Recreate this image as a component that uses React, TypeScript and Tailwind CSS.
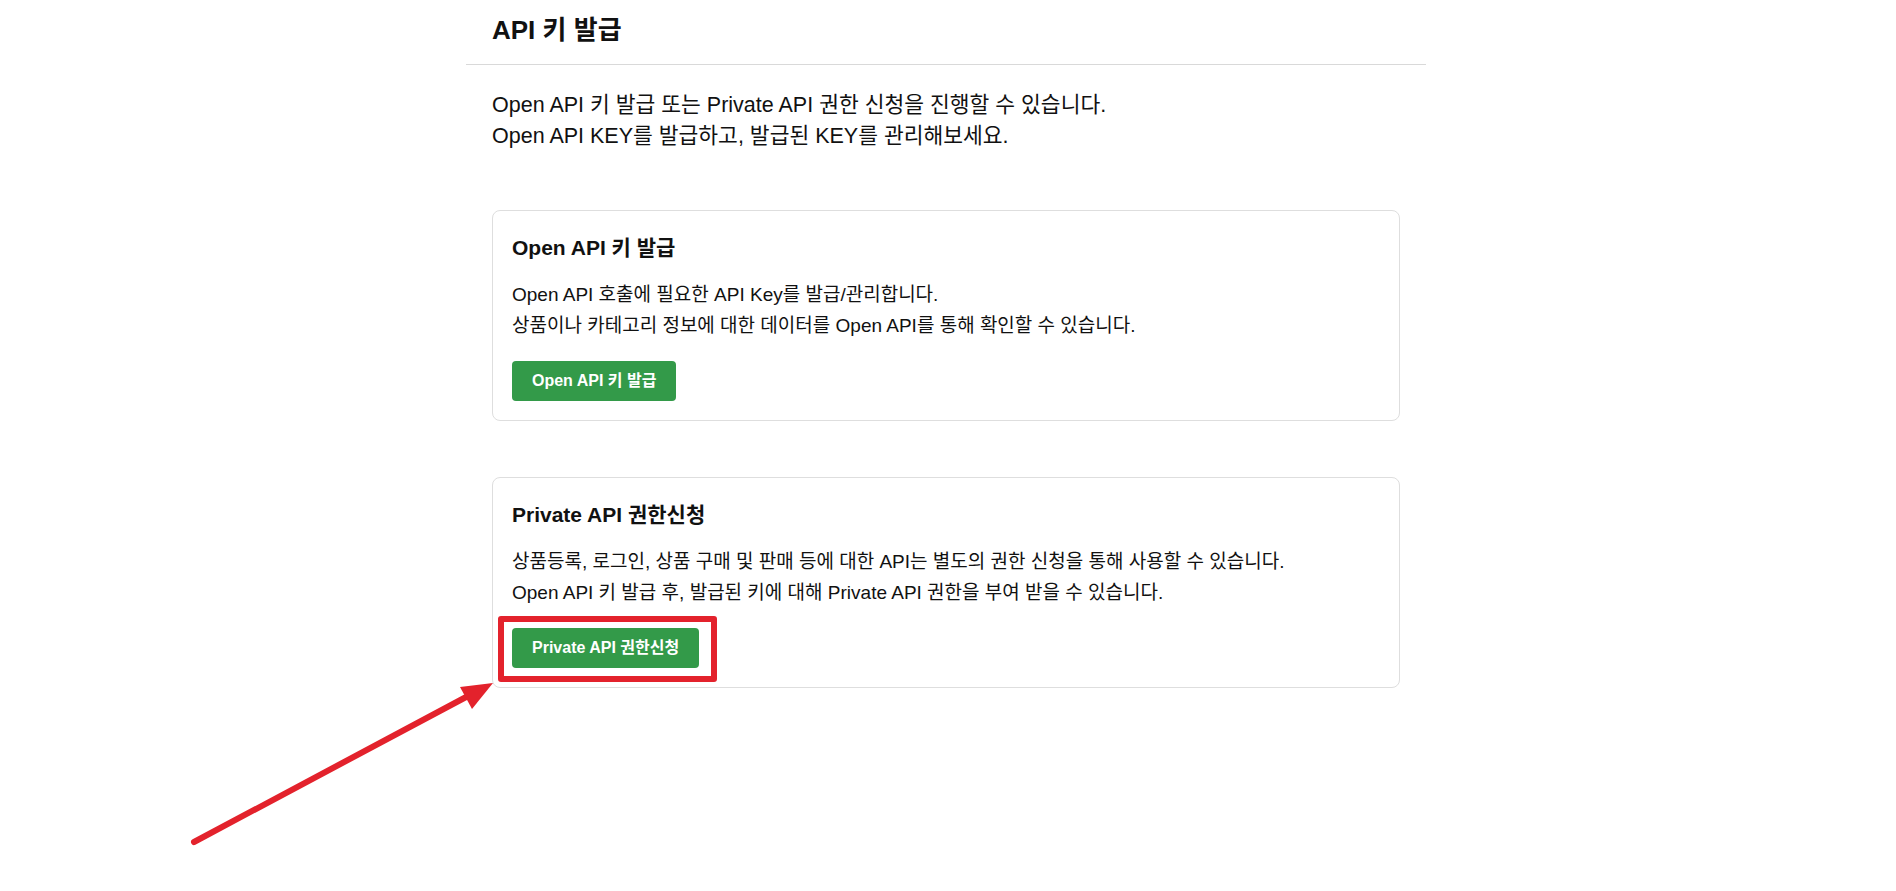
import React from "react";

const font = { fontFamily: '"Liberation Sans", "Noto Sans CJK KR", sans-serif' };

function Card({
  title,
  lines,
  button,
  highlight,
}: {
  title: string;
  lines: string[];
  button: string;
  highlight?: boolean;
}) {
  return (
    <div className="rounded-[8px] border border-[#dedede] bg-white px-[19px] pt-[22px] pb-[19px]">
      <h2 className="text-[21px] leading-[30px] font-bold text-[#111]">{title}</h2>
      <div className="mt-[16px] text-[19px] leading-[31px] text-[#111]">
        {lines.map((l) => (
          <p key={l}>{l}</p>
        ))}
      </div>
      <div className="mt-[20px] flex">
        <div className="relative">
          <button className="h-[40px] rounded-[4px] bg-[#339a49] px-[20px] text-[16px] font-bold text-white">
            {button}
          </button>
          {highlight && (
            <div className="pointer-events-none absolute -left-[14px] -top-[12px] -right-[18px] -bottom-[14px] rounded-[3px] border-[6px] border-[#e3222c]" />
          )}
        </div>
      </div>
    </div>
  );
}

export default function App() {
  return (
    <div className="relative flex min-h-[891px] w-full justify-center bg-white pr-[4px]" style={font}>
      <div className="w-[960px]">
        <h1 className="border-b border-[#d9d9d9] px-[26px] pt-[14px] pb-[18px] text-[26px] leading-[32px] font-bold text-[#111]">
          API 키 발급
        </h1>
        <div className="px-[26px]">
          <div className="pt-[25px] text-[21.5px] leading-[31px] text-[#111]">
            <p>Open API 키 발급 또는 Private API 권한 신청을 진행할 수 있습니다.</p>
            <p>Open API KEY를 발급하고, 발급된 KEY를 관리해보세요.</p>
          </div>
          <div className="mt-[58px]">
            <Card
              title="Open API 키 발급"
              lines={[
                "Open API 호출에 필요한 API Key를 발급/관리합니다.",
                "상품이나 카테고리 정보에 대한 데이터를 Open API를 통해 확인할 수 있습니다.",
              ]}
              button="Open API 키 발급"
            />
          </div>
          <div className="mt-[56px]">
            <Card
              title="Private API 권한신청"
              lines={[
                "상품등록, 로그인, 상품 구매 및 판매 등에 대한 API는 별도의 권한 신청을 통해 사용할 수 있습니다.",
                "Open API 키 발급 후, 발급된 키에 대해 Private API 권한을 부여 받을 수 있습니다.",
              ]}
              button="Private API 권한신청"
              highlight
            />
          </div>
        </div>
      </div>
      <svg
        className="pointer-events-none absolute left-0 top-0"
        width="1896"
        height="891"
        viewBox="0 0 1896 891"
      >
        <line x1="194" y1="842" x2="468" y2="696" stroke="#e3222c" strokeWidth="6" strokeLinecap="round" />
        <polygon points="493,683 460,687 472,709" fill="#e3222c" />
      </svg>
    </div>
  );
}
